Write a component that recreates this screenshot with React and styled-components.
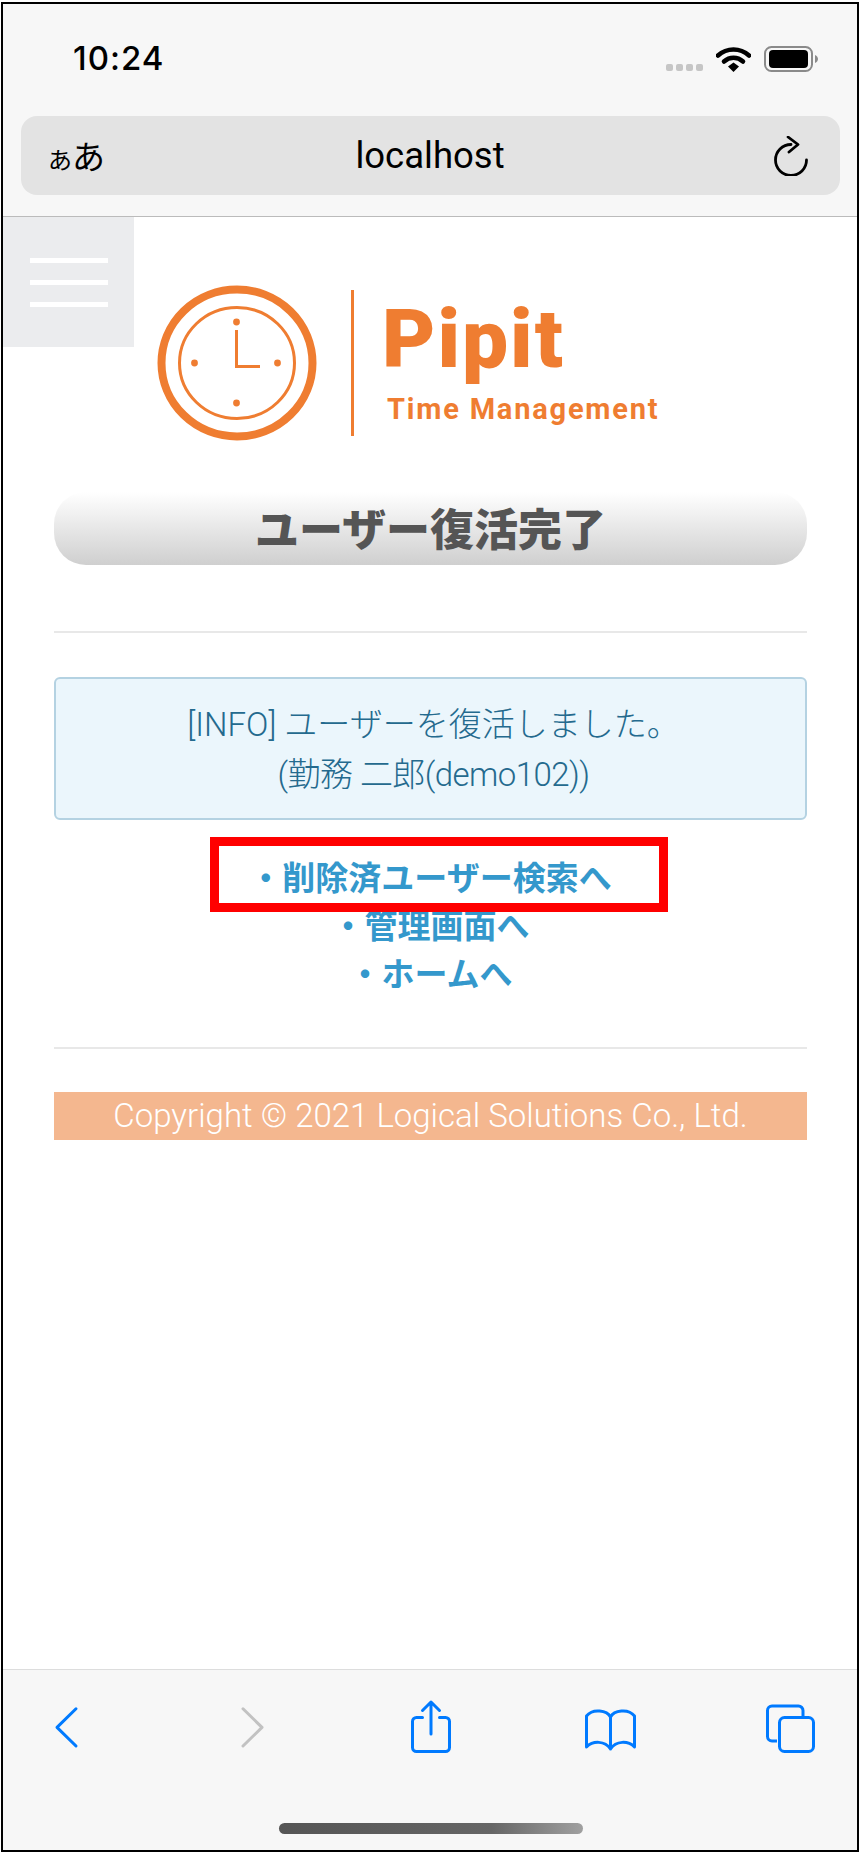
import styled, { createGlobalStyle } from "styled-components"

const GlobalStyle = createGlobalStyle`
  html, body {
    margin: 0;
    padding: 0;
    background: #fff;
  }
  * {
    box-sizing: border-box;
  }
`

const BODY_FONT = `Roboto, "Noto Sans CJK JP", sans-serif`
const JP_FONT = `"Noto Sans CJK JP", sans-serif`

const LINKS = ["・削除済ユーザー検索へ", "・管理画面へ", "・ホームへ"]

const App = () => {
  return (
    <>
      <GlobalStyle />
      <Frame>
        <TopBar>
          <StatusRow>
            <Time>10:24</Time>
            <StatusIcons>
              <SignalDots>
                <i /><i /><i /><i />
              </SignalDots>
              <svg width="35" height="26" viewBox="0 0 35 26">
                <path d="M2 9.500C11 1.500 24 1.500 33 9.500" fill="none" stroke="#000" strokeWidth="4.600" strokeLinecap="round" />
                <path d="M8 15.500C13.500 10.500 21.500 10.500 27 15.500" fill="none" stroke="#000" strokeWidth="4.600" strokeLinecap="round" />
                <path d="M12 20.500L17.500 16.500L23 20.500L17.500 26Z" fill="#000" />
              </svg>
              <svg width="54" height="26" viewBox="0 0 54 26">
                <rect x="1" y="1" width="47" height="24" rx="6.500" fill="none" stroke="#8a8a8a" strokeWidth="2" />
                <rect x="5" y="4" width="39" height="18" rx="4" fill="#000" />
                <path d="M51 9C53 10 54 11.500 54 13C54 14.500 53 16 51 17Z" fill="#8a8a8a" />
              </svg>
            </StatusIcons>
          </StatusRow>
          <UrlBar>
            <TextSize><small>あ</small>あ</TextSize>
            <UrlText>localhost</UrlText>
            <ReloadIcon width="36" height="40" viewBox="0 0 36 40">
              <path d="M18 8.500A15.500 15.500 0 1 0 33.500 24" fill="none" stroke="#000" strokeWidth="2.800" strokeLinecap="round" />
              <path d="M15 1L25 8.500L16 16" fill="none" stroke="#000" strokeWidth="2.800" strokeLinecap="round" strokeLinejoin="round" />
            </ReloadIcon>
          </UrlBar>
        </TopBar>

        <Main>
          <MenuButton>
            <span /><span /><span />
          </MenuButton>
          <Logo>
            <svg width="160" height="156" viewBox="0 0 160 156">
              <ellipse cx="80" cy="78" rx="75.500" ry="73.500" fill="none" stroke="#ef7d31" strokeWidth="8" />
              <ellipse cx="80" cy="78" rx="57.500" ry="55.500" fill="none" stroke="#ef7d31" strokeWidth="3" />
              <circle cx="79.500" cy="37" r="3.400" fill="#ef7d31" />
              <circle cx="37.500" cy="78" r="3.400" fill="#ef7d31" />
              <circle cx="120.500" cy="78" r="3.400" fill="#ef7d31" />
              <circle cx="79.500" cy="118" r="3.400" fill="#ef7d31" />
              <path d="M79.500 45V81.500H103" fill="none" stroke="#ef7d31" strokeWidth="3" />
            </svg>
            <LogoBar />
            <LogoText>
              <LogoName>Pipit</LogoName>
              <LogoSub>Time Management</LogoSub>
            </LogoText>
          </Logo>

          <Content>
            <Title>ユーザー復活完了</Title>
            <Rule $top={66} />
            <InfoBox>
              [INFO] ユーザーを復活しました。<br />
              <InfoName>(勤務 二郎(demo102))</InfoName>
            </InfoBox>
            <LinkList>
              {LINKS.map(link => (
                <LinkItem key={link}>{link}</LinkItem>
              ))}
              <Highlight />
            </LinkList>
            <Rule $top={51} />
            <Footer>Copyright © 2021 Logical Solutions Co., Ltd.</Footer>
          </Content>
        </Main>

        <BottomBar>
          <ToolIcons>
            <svg width="56" height="56" viewBox="0 0 56 56">
              <path d="M37 11L18 30L37 49" transform="translate(0 -1) scale(1 .98)" fill="none" stroke="#007aff" strokeWidth="3" strokeLinecap="round" strokeLinejoin="round" />
            </svg>
            <svg width="56" height="56" viewBox="0 0 56 56">
              <path d="M23 11L42 30L23 49" transform="translate(0 -1) scale(1 .98)" fill="none" stroke="#c2c2c2" strokeWidth="3" strokeLinecap="round" strokeLinejoin="round" />
            </svg>
            <svg width="56" height="56" viewBox="0 0 56 56">
              <path d="M21.500 18.500H15.500A4 4 0 0 0 11.500 22.500V48.500A4 4 0 0 0 15.500 52.500H44.500A4 4 0 0 0 48.500 48.500V22.500A4 4 0 0 0 44.500 18.500H38.500" fill="none" stroke="#007aff" strokeWidth="3" strokeLinecap="round" />
              <path d="M30 35V3M21.500 11.500L30 3L38.500 11.500" fill="none" stroke="#007aff" strokeWidth="3" strokeLinecap="round" strokeLinejoin="round" />
            </svg>
            <svg width="56" height="56" viewBox="0 0 56 56">
              <path d="M29.500 18C26 11.500 12 9 5.500 17V48C12 41.500 24 41.500 29.500 50C35 41.500 47 41.500 53.500 48V17C47 9 33 11.500 29.500 18ZM29.500 18V50" fill="none" stroke="#007aff" strokeWidth="3" strokeLinecap="round" strokeLinejoin="round" />
            </svg>
            <svg width="56" height="56" viewBox="0 0 56 56">
              <path d="M15 42H10A4.500 4.500 0 0 1 5.500 37.500V11.500A4.500 4.500 0 0 1 10 7H36.500A4.500 4.500 0 0 1 41 11.500V17" fill="none" stroke="#007aff" strokeWidth="3" />
              <rect x="17.500" y="18.500" width="34" height="34" rx="5" fill="none" stroke="#007aff" strokeWidth="3" />
            </svg>
          </ToolIcons>
          <HomeIndicator />
        </BottomBar>
      </Frame>
    </>
  )
}

const Frame = styled.div`
  width: 858px;
  height: 1850px;
  margin: 2px 0 0 1px;
  border: 2px solid #000;
  display: flex;
  flex-direction: column;
  background: #fff;
  font-family: ${BODY_FONT};
`

const TopBar = styled.header`
  height: 213px;
  background: #f7f7f7;
  border-bottom: 1px solid #bbb;
`

const StatusRow = styled.div`
  height: 108px;
  padding: 0 39px 0 70px;
  display: flex;
  align-items: center;
  justify-content: space-between;
`

const Time = styled.div`
  font-family: Inter, sans-serif;
  font-size: 33px;
  font-weight: 500;
  letter-spacing: 1px;
  color: #000;
`

const StatusIcons = styled.div`
  display: flex;
  align-items: flex-end;
  gap: 13px;
  margin-top: 2px;
`

const SignalDots = styled.div`
  display: flex;
  gap: 3px;
  margin-bottom: 1px;
  & i {
    display: block;
    width: 7px;
    height: 7px;
    border-radius: 2px;
    background: #c6c6c6;
  }
`

const UrlBar = styled.div`
  height: 79px;
  margin: 4px 17px 0 18px;
  padding: 0 31px 0 27px;
  border-radius: 16px;
  background: #e3e3e3;
  display: grid;
  grid-template-columns: 1fr auto 1fr;
  align-items: center;
  color: #000;
`

const TextSize = styled.div`
  font-family: ${JP_FONT};
  font-size: 33px;
  line-height: 1;
  & small {
    font-size: 24px;
  }
`

const UrlText = styled.div`
  margin-left: 3px;
  font-family: Roboto, sans-serif;
  font-size: 36.5px;
`

const ReloadIcon = styled.svg`
  justify-self: end;
`

const Main = styled.main`
  position: relative;
  flex: 1;
`

const MenuButton = styled.div`
  position: absolute;
  top: 0;
  left: 0;
  width: 131px;
  height: 130px;
  padding-top: 41px;
  background: #ebecee;
  display: flex;
  flex-direction: column;
  align-items: center;
  gap: 17px;
  & span {
    display: block;
    width: 78px;
    height: 5px;
    background: #fff;
  }
`

const Logo = styled.div`
  display: flex;
  align-items: flex-start;
  height: 156px;
  margin: 68px 0 0 154px;
`

const LogoBar = styled.div`
  width: 3px;
  height: 146px;
  margin: 5px 0 0 34px;
  background: #ef7d31;
`

const LogoText = styled.div`
  margin: 14px 0 0 28px;
  font-family: Roboto, "Liberation Sans", sans-serif;
  color: #ef7d31;
`

const LogoName = styled.div`
  font-size: 82px;
  font-weight: 900;
  line-height: 80px;
  letter-spacing: 2px;
`

const LogoSub = styled.div`
  margin: 16px 0 0 5px;
  font-size: 29px;
  font-weight: 700;
  line-height: 29px;
  letter-spacing: 1.8px;
`

const Content = styled.div`
  width: 753px;
  margin-left: 51px;
`

const Title = styled.h1`
  height: 73px;
  margin: 51px 0 0;
  border-radius: 32px;
  background: linear-gradient(#fff, #cfcfcf);
  font-family: ${JP_FONT};
  font-size: 44px;
  font-weight: 900;
  line-height: 71px;
  text-align: center;
  color: #555;
`

const Rule = styled.div`
  height: 2px;
  margin-top: ${props => props.$top}px;
  background: #e8e8e8;
`

const InfoBox = styled.div`
  height: 143px;
  margin-top: 44px;
  padding: 21px 0 0 6px;
  border: 2px solid #b4d2e2;
  border-radius: 6px;
  background: #ebf6fc;
  color: #246a8e;
  font-size: 33px;
  font-weight: 300;
  line-height: 50px;
  text-align: center;
`

const InfoName = styled.span`
  letter-spacing: -0.55px;
`

const LinkList = styled.ul`
  position: relative;
  margin: 32px 0 0;
  padding: 0;
  list-style: none;
`

const LinkItem = styled.li`
  font-family: ${JP_FONT};
  font-size: 33px;
  font-weight: 700;
  line-height: 48px;
  text-align: center;
  color: #3498cc;
`

const Highlight = styled.div`
  position: absolute;
  top: -15px;
  left: 156px;
  width: 458px;
  height: 75px;
  border: 9px solid #f00;
`

const Footer = styled.footer`
  height: 48px;
  margin-top: 43px;
  background: #f4b78f;
  color: #fff;
  font-size: 33px;
  font-weight: 300;
  line-height: 48px;
  text-align: center;
`

const BottomBar = styled.div`
  height: 181px;
  padding-top: 29px;
  background: #f7f7f7;
  border-top: 1px solid #ddd;
  display: flex;
  flex-direction: column;
`

const ToolIcons = styled.div`
  display: flex;
  justify-content: space-between;
  padding: 0 39px 0 36px;
`

const HomeIndicator = styled.div`
  width: 304px;
  height: 11px;
  margin: auto 0 16px 276px;
  border-radius: 6px;
  background: linear-gradient(90deg, #555, #666 70%, #a0a0a0);
`

export default App
